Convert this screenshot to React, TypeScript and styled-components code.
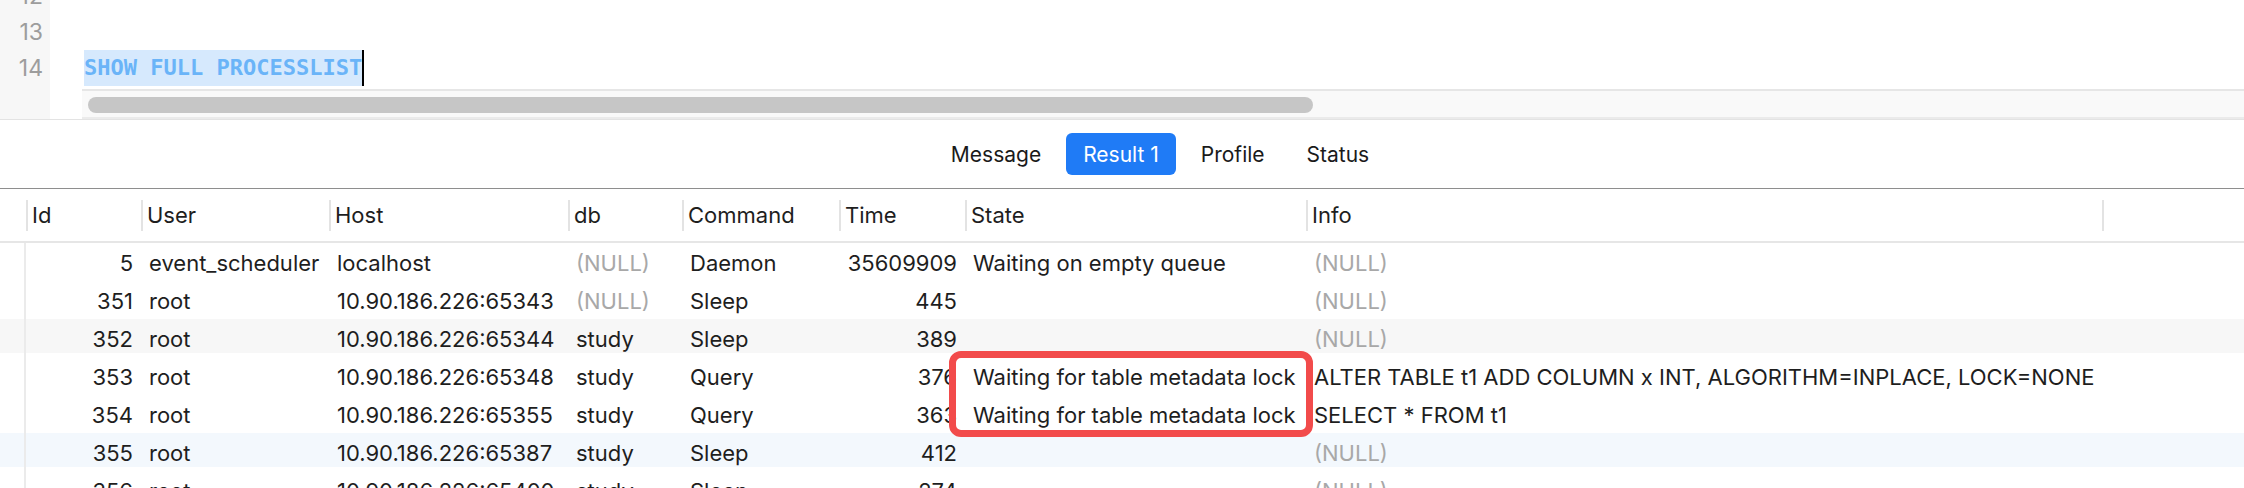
import React from "react";
import styled, { createGlobalStyle } from "styled-components";

const GlobalStyle = createGlobalStyle`
  html, body { margin: 0; padding: 0; background: #ffffff; }
  body { font-family: "Inter", "Liberation Sans", sans-serif; }
  * { box-sizing: border-box; }
`;

const Page = styled.div`
  width: 2244px;
  height: 488px;
  overflow: hidden;
  background: #ffffff;
  display: flex;
  flex-direction: column;
`;

/* ---------- Editor ---------- */
const Editor = styled.section`
  display: flex;
  height: 120px;
  border-bottom: 1px solid #e3e3e3;
  flex-shrink: 0;
`;

const Gutter = styled.div`
  width: 50px;
  background: #f7f7f7;
  overflow: hidden;
  display: flex;
  flex-direction: column;
  align-items: flex-end;
  padding-right: 7px;
`;

const LineNumbers = styled.div`
  margin-top: -22px;
  display: flex;
  flex-direction: column;
  align-items: flex-end;
`;

const LineNo = styled.div`
  height: 36px;
  line-height: 36px;
  font-size: 23px;
  color: #9d9d9d;
  font-family: "Inter", "Liberation Sans", sans-serif;
`;

const EditorMain = styled.div`
  flex: 1;
  display: flex;
  flex-direction: column;
  min-width: 0;
`;

const CodeArea = styled.div`
  height: 89px;
  overflow: hidden;
  padding-left: 34px;
`;

const CodeLines = styled.div`
  margin-top: -22px;
`;

const CodeLine = styled.div`
  height: 36px;
  display: flex;
  align-items: center;
`;

const Selected = styled.span`
  background: #d6e9fd;
  color: #6ab4f8;
  font-family: "DejaVu Sans Mono", "Liberation Mono", monospace;
  font-weight: bold;
  font-size: 22px;
  height: 36px;
  line-height: 36px;
  white-space: pre;
`;

const Caret = styled.span`
  display: inline-block;
  width: 2px;
  height: 36px;
  background: #000000;
`;

const ScrollRow = styled.div`
  height: 30px;
  margin-left: 32px;
  background: #f9f9f9;
  border-top: 2px solid #e6e6e6;
  border-bottom: 2px solid #ebebeb;
  padding: 6px 0 0 6px;
`;

const Thumb = styled.div`
  width: 1225px;
  height: 16px;
  border-radius: 8px;
  background: #c6c6c6;
`;

/* ---------- Tabs ---------- */
const TabBar = styled.nav`
  height: 68px;
  flex-shrink: 0;
  display: flex;
  align-items: center;
  justify-content: center;
  gap: 8px;
  padding-left: 76px;
`;

const Tab = styled.button<{ $active?: boolean }>`
  height: 42px;
  padding: 0 17px;
  border: none;
  border-radius: 6px;
  font-family: "Inter", "Liberation Sans", sans-serif;
  font-size: 21px;
  background: ${(p) => (p.$active ? "#1f7bf6" : "transparent")};
  color: ${(p) => (p.$active ? "#ffffff" : "#1a1a1a")};
  cursor: pointer;
`;

/* ---------- Table ---------- */
const COLS = "26px 115px 188px 239px 114px 157px 126px 341px 796px 1fr";

const Table = styled.div`
  border-top: 1px solid #8e8e8e;
  flex: 1;
  display: flex;
  flex-direction: column;
  font-family: "Inter", "Liberation Sans", sans-serif;
  font-size: 22px;
  color: #1e1e1e;
`;

const HeaderRow = styled.div`
  display: grid;
  grid-template-columns: ${COLS};
  height: 54px;
  border-bottom: 2px solid #e6e6e6;
`;

const HeaderCell = styled.div<{ $sep?: boolean }>`
  position: relative;
  display: flex;
  align-items: center;
  padding-left: 6px;
  white-space: nowrap;
  &::before {
    content: "";
    display: ${(p) => (p.$sep ? "block" : "none")};
    position: absolute;
    left: 0;
    top: 11px;
    width: 2px;
    height: 31px;
    background: #e3e3e3;
  }
`;

const Body = styled.div`
  position: relative;
  display: flex;
  flex-direction: column;
`;

const Row = styled.div<{ $bg?: string }>`
  display: grid;
  grid-template-columns: ${COLS};
  height: 38px;
  background: ${(p) =>
    p.$bg ? `linear-gradient(${p.$bg}, ${p.$bg}) top / 100% 34px no-repeat` : "transparent"};
`;

const RowGutter = styled.div`
  border-right: 2px solid #ebebeb;
`;

const Cell = styled.div<{ $right?: boolean; $null?: boolean }>`
  display: flex;
  align-items: center;
  justify-content: ${(p) => (p.$right ? "flex-end" : "flex-start")};
  padding: 2px ${(p) => (p.$right ? "8px" : "0")} 0 ${(p) => (p.$right ? "0" : "8px")};
  white-space: nowrap;
  overflow: hidden;
  color: ${(p) => (p.$null ? "#a8a8a8" : "#1e1e1e")};
`;

const Highlight = styled.div`
  position: absolute;
  left: 949px;
  top: 108px;
  width: 364px;
  height: 86px;
  border: 7px solid #f24b4b;
  border-radius: 12px;
  pointer-events: none;
`;

type Proc = {
  id: string;
  user: string;
  host: string;
  db: string | null;
  command: string;
  time: string;
  state: string;
  info: string | null;
  bg?: string;
};

const rows: Proc[] = [
  { id: "5", user: "event_scheduler", host: "localhost", db: null, command: "Daemon", time: "35609909", state: "Waiting on empty queue", info: null },
  { id: "351", user: "root", host: "10.90.186.226:65343", db: null, command: "Sleep", time: "445", state: "", info: null },
  { id: "352", user: "root", host: "10.90.186.226:65344", db: "study", command: "Sleep", time: "389", state: "", info: null, bg: "#f7f7f7" },
  { id: "353", user: "root", host: "10.90.186.226:65348", db: "study", command: "Query", time: "376", state: "Waiting for table metadata lock", info: "ALTER TABLE t1 ADD COLUMN x INT, ALGORITHM=INPLACE, LOCK=NONE" },
  { id: "354", user: "root", host: "10.90.186.226:65355", db: "study", command: "Query", time: "363", state: "Waiting for table metadata lock", info: "SELECT * FROM t1" },
  { id: "355", user: "root", host: "10.90.186.226:65387", db: "study", command: "Sleep", time: "412", state: "", info: null, bg: "#f3f8fd" },
  { id: "356", user: "root", host: "10.90.186.226:65400", db: "study", command: "Sleep", time: "274", state: "", info: null },
];

const headers = ["Id", "User", "Host", "db", "Command", "Time", "State", "Info", ""];

export default function App() {
  return (
    <>
      <GlobalStyle />
      <Page>
        <Editor>
          <Gutter>
            <LineNumbers>
              <LineNo>12</LineNo>
              <LineNo>13</LineNo>
              <LineNo>14</LineNo>
            </LineNumbers>
          </Gutter>
          <EditorMain>
            <CodeArea>
              <CodeLines>
                <CodeLine />
                <CodeLine />
                <CodeLine>
                  <Selected>SHOW FULL PROCESSLIST</Selected>
                  <Caret />
                </CodeLine>
              </CodeLines>
            </CodeArea>
            <ScrollRow>
              <Thumb />
            </ScrollRow>
          </EditorMain>
        </Editor>

        <TabBar>
          <Tab>Message</Tab>
          <Tab $active>Result 1</Tab>
          <Tab>Profile</Tab>
          <Tab>Status</Tab>
        </TabBar>

        <Table>
          <HeaderRow>
            <HeaderCell />
            {headers.map((h, i) => (
              <HeaderCell key={i} $sep>
                {h}
              </HeaderCell>
            ))}
          </HeaderRow>
          <Body>
            {rows.map((r) => (
              <Row key={r.id} $bg={r.bg}>
                <RowGutter />
                <Cell $right>{r.id}</Cell>
                <Cell>{r.user}</Cell>
                <Cell>{r.host}</Cell>
                <Cell $null={r.db === null}>{r.db ?? "(NULL)"}</Cell>
                <Cell>{r.command}</Cell>
                <Cell $right>{r.time}</Cell>
                <Cell>{r.state}</Cell>
                <Cell $null={r.info === null}>{r.info ?? "(NULL)"}</Cell>
                <Cell />
              </Row>
            ))}
            <Highlight />
          </Body>
        </Table>
      </Page>
    </>
  );
}
